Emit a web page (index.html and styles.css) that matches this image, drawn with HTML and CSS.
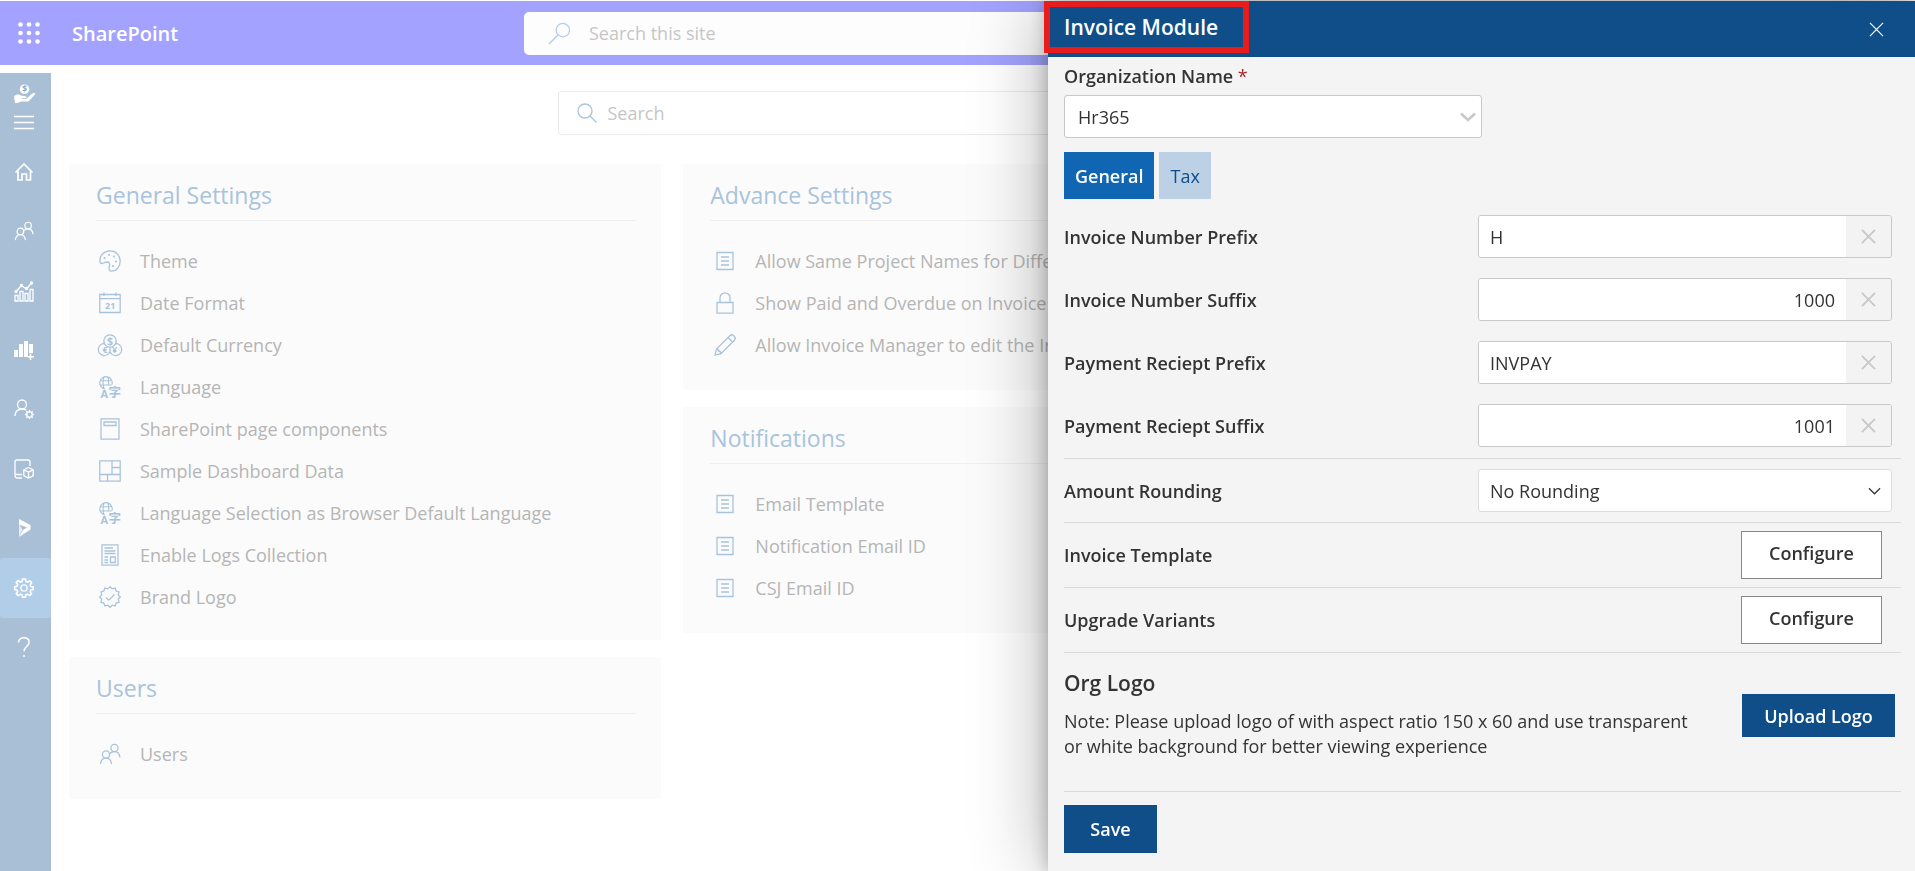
FILE: index.html
```html
<!DOCTYPE html>
<html lang="en">
<head>
<meta charset="utf-8">
<title>Invoice Module</title>
<meta name="viewport" content="width=device-width, initial-scale=1">
<link rel="stylesheet" href="styles.css">
</head>
<body>
<svg class="sprite" aria-hidden="true">
  <symbol id="i-users" viewBox="0 0 22 22"><circle cx="15.5" cy="5" r="3.6"/><circle cx="7" cy="11.5" r="3.6"/><path d="M1.5 21c.3-3.6 2.300-5.900 5.500-5.900s5.200 2.300 5.500 5.900M11 10.500c1-1.300 2.500-1.900 4.400-1.900 3.200 0 5.200 2.300 5.500 5.900"/></symbol>
  <symbol id="i-list" viewBox="0 0 22 22"><path d="M3 2.500h16v17H3zM7 7h8M7 11h8M7 15h8"/></symbol>
  <symbol id="i-lang" viewBox="0 0 22 22"><path stroke-width="1.100" d="M13 8.500A6.200 6.200 0 1 0 6 13M1.200 4.800h11.200M1.200 9h11.500M5 .8C4 4 4 9.500 5 12.800M8.800.8c.9 2.600 1.100 5.200.8 8"/><text class="glyph" x="1.500" y="22" font-size="11">A</text><text class="glyph glyph-cjk" x="9.500" y="20.500" font-size="12.500">字</text></symbol>
</svg>

<header class="suite">
  <button class="waffle" aria-label="App launcher"><svg viewBox="0 0 22 22"><g fill="#fff"><circle cx="2.500" cy="2.500" r="2.300"/><circle cx="11" cy="2.500" r="2.300"/><circle cx="19.500" cy="2.500" r="2.300"/><circle cx="2.500" cy="11" r="2.300"/><circle cx="11" cy="11" r="2.300"/><circle cx="19.500" cy="11" r="2.300"/><circle cx="2.500" cy="19.500" r="2.300"/><circle cx="11" cy="19.500" r="2.300"/><circle cx="19.500" cy="19.500" r="2.300"/></g></svg></button>
  <a class="suite-name" href="#">SharePoint</a>
  <label class="suite-search">
    <svg class="line" viewBox="0 0 24 24"><circle cx="15.500" cy="8.500" r="7"/><path d="M10.500 13.500L1 23"/></svg>
    <input type="search" placeholder="Search this site" aria-label="Search this site">
  </label>
</header>

<div class="app">
  <aside class="rail">
    <svg class="brand" viewBox="0 0 24 20"><circle cx="12" cy="5.500" r="5" fill="#fff"/><text x="9.700" y="8.800" font-size="9" class="brand-sign">$</text><path fill="#fff" d="M1 13c2-2 5-2.500 7-1l5 .8c1.500.3 1.300 1.900 0 1.900H9v.7h5l5.500-5c1.500-1.500 3.800-1.300 4 .2L17 17.500c-1 .8-2 1-3.500 1H8.500L4.500 20H2z"/></svg>
    <button class="burger" aria-label="Toggle navigation"><svg class="line" viewBox="0 0 20 15"><path stroke-width="1.700" d="M0 1.500h20M0 7.500h20M0 13.500h20"/></svg></button>
    <nav class="rail-nav">
      <a href="#" aria-label="Home"><svg class="line" viewBox="0 0 20 20"><path stroke-width="1.700" d="M1.500 10.500L10 2l8.500 8.500M4 9v9h4v-6h4.500v6h4V9"/></svg></a>
      <a href="#" aria-label="Customers"><svg class="line" viewBox="0 0 22 22"><use href="#i-users"/></svg></a>
      <a href="#" aria-label="Reports"><svg class="line" viewBox="0 0 20 20"><path d="M1 14.500h3V20H1zM6 10.500h3V20H6zM11 12.500h3V20h-3zM16 8.500h3V20h-3zM2 10.500l5.500-6 5 3.500 5-6"/><g fill="#fff"><circle cx="2" cy="10.500" r="1"/><circle cx="7.500" cy="4.500" r="1"/><circle cx="12.500" cy="7.500" r="1"/><circle cx="17.500" cy="2" r="1"/></g></svg></a>
      <a href="#" aria-label="Add report"><svg viewBox="0 0 20 20"><path fill="#fff" d="M0 10h4v7H0zM5 4h4v13H5zM10 1h4v16h-4zM15 4h4v9h-4z"/><path class="stroke-only" d="M16.500 13.500V20M13.500 16.700H20"/></svg></a>
      <a href="#" aria-label="User settings"><svg class="line" viewBox="0 0 20 20"><circle cx="8" cy="5.500" r="4.500"/><path d="M1 17c.2-4.500 3-7 7-7 1.800 0 3.200.5 4.300 1.300"/><circle cx="15.500" cy="15.500" r="2.700"/><path d="M15.500 11v2M15.500 18v2M11 15.500h2M18 15.500h2M12.300 12.300l1.400 1.400M17.300 17.300l1.400 1.400M12.300 18.700l1.400-1.400M17.300 13.700l1.400-1.400"/></svg></a>
      <a href="#" aria-label="Products"><svg class="line" viewBox="0 0 20 20"><path d="M8 19H3a2 2 0 0 1-2-2V3a2 2 0 0 1 2-2h11a2 2 0 0 1 2 2v4M1.500 15.500H8M14.500 8.500l4.700 2.300v6L14.500 19l-4.700-2.200v-6zM9.800 10.800l4.700 2.200 4.700-2.200M14.500 13v6"/></svg></a>
      <a href="#" aria-label="Dynamics"><svg viewBox="0 0 20 20"><path fill="#fff" d="M5 1l11.500 6v4.500L5 19l4-7 4-2.500-8-3z"/><path fill="#fff" d="M5 6v13l3.500-7.500z" opacity=".7"/></svg></a>
      <a href="#" class="active" aria-label="Settings"><svg class="line" viewBox="0 0 20 20"><circle cx="10" cy="10" r="3.200"/><path stroke-width="1.600" d="M8.500 1h3l.4 2.500 1.700.7L15.700 2.700l1.900 1.900-1.400 2.200.7 1.700L19.200 9v2.500l-2.400.5-.7 1.700 1.400 2.100-1.800 1.800-2.200-1.400-1.700.7-.4 2.300H8.500L8 16.900l-1.700-.7-2.100 1.400-1.900-1.900 1.400-2.100L3 12l-2.300-.5V8.700L3 8.200l.7-1.700-1.400-2.100 1.900-1.800L6.300 4 8 3.400z"/></svg></a>
      <a href="#" aria-label="Help"><svg class="line" viewBox="0 0 20 20"><path stroke-width="1.500" d="M4.500 5.500C4.500 2.500 6.800.8 9.800.8s5.300 1.700 5.300 4.500c0 4-5.100 4.500-5.100 9M10 18v2"/></svg></a>
    </nav>
  </aside>

  <main class="content">
    <label class="search">
      <svg class="line" viewBox="0 0 20 20"><circle cx="8" cy="8" r="7"/><path d="M13 13l6.500 6.500"/></svg>
      <input type="search" placeholder="Search" aria-label="Search settings">
    </label>
    <div class="columns">
      <div class="column">
        <section class="card card-tall">
          <h2>General Settings</h2>
          <ul>
            <li><a href="#"><svg class="line" viewBox="0 0 22 22"><path d="M11 .8C5 .8.8 5.500.8 10.500c0 2 .8 3 2.200 3 2 0 2.800-1.500 5-1.500 2.300 0 3 1.500 2.500 3.500-.7 3-.7 5.700 2 5.700 5 0 8.700-4.700 8.700-10.200S17 .8 11 .8z"/><g class="dots"><circle cx="5.500" cy="8" r="1.100"/><circle cx="10" cy="5" r="1.100"/><circle cx="15" cy="6.500" r="1.100"/><circle cx="17" cy="11.500" r="1.100"/><circle cx="14" cy="16" r="1.100"/></g></svg>Theme</a></li>
            <li><a href="#"><svg class="line" viewBox="0 0 22 22"><path d="M.8 2.500h20.400v18H.8zM.8 6.700h20.400M5 .5v3.500M17 .5v3.500"/><text class="glyph" x="6" y="17" font-size="9">21</text></svg>Date Format</a></li>
            <li><a href="#"><svg class="line" viewBox="0 0 22 22"><circle cx="11" cy="7" r="6.200"/><path d="M5.500 9.500a6 6 0 1 0 5.500 8M16.500 9.500a6 6 0 1 1-5.500 8M11 17.500v-4"/><text class="glyph" x="8" y="11" font-size="10.500">$</text><text class="glyph" x="3.500" y="19" font-size="9">€</text><text class="glyph" x="13" y="19" font-size="9">¥</text></svg>Default Currency</a></li>
            <li><a href="#"><svg class="line" viewBox="0 0 22 22"><use href="#i-lang"/></svg>Language</a></li>
            <li><a href="#"><svg class="line" viewBox="0 0 22 22"><path d="M2 .8h18v20.400H2zM5 4h12v3.500H5z"/></svg>SharePoint page components</a></li>
            <li><a href="#"><svg class="line" viewBox="0 0 22 22"><path d="M.8.8h20.400v20.400H.8zM.8 14.500h20.400M13 .8v13.700M13 7.500h8.200M8.500 14.500v6.700"/></svg>Sample Dashboard Data</a></li>
            <li><a href="#"><svg class="line" viewBox="0 0 22 22"><use href="#i-lang"/></svg>Language Selection as Browser Default Language</a></li>
            <li><a href="#"><svg class="line" viewBox="0 0 22 22"><path d="M3 .8h16v20.400H3zM5.500 4H14M5.500 7h11M5.500 9.500h11M5.500 13H9M5.500 16H9M5.500 18.500H9M11.500 13h4.800v5.500h-4.800z"/></svg>Enable Logs Collection</a></li>
            <li><a href="#"><svg class="line" viewBox="0 0 22 22"><path d="M11 .8l2.200 2.100 3-.8.900 2.900 2.900.9-.8 3 2.100 2.100-2.100 2.200.8 3-2.900.8-.9 3-3-.8L11 21.300l-2.200-2.100-3 .8-.9-3-2.900-.8.800-3L.7 11l2.100-2.100-.8-3L4.900 5l.9-2.900 3 .8zM7 11.500l2.800 2.700L15.500 8.500"/></svg>Brand Logo</a></li>
          </ul>
        </section>
        <section class="card card-users">
          <h2>Users</h2>
          <ul>
            <li><a href="#"><svg class="line" viewBox="0 0 22 22"><use href="#i-users"/></svg>Users</a></li>
          </ul>
        </section>
      </div>
      <div class="column">
        <section class="card">
          <h2>Advance Settings</h2>
          <ul class="wide">
            <li><a href="#"><svg class="line" viewBox="0 0 22 22"><use href="#i-list"/></svg>Allow Same Project Names for Different Customers</a></li>
            <li><a href="#"><svg class="line" viewBox="0 0 22 22"><path d="M3 10.500h16v10.700H3zM6 10.500V5.800a5 5 0 0 1 10 0v4.700"/></svg>Show Paid and Overdue on Invoice</a></li>
            <li><a href="#"><svg class="line" viewBox="0 0 22 22"><path d="M1 21.200l1.500-6.200L15.800 1.700c1-1 2.500-1.100 3.500-.2l1.200 1.200c1 1 .9 2.500-.1 3.500L7 19.700zM2.500 15c1.300 0 2 .7 2 2 1.500.2 2.500 1 2.500 2.700M14 3.500L18.500 8"/></svg>Allow Invoice Manager to edit the Invoice</a></li>
          </ul>
        </section>
        <section class="card">
          <h2>Notifications</h2>
          <ul class="wide">
            <li><a href="#"><svg class="line" viewBox="0 0 22 22"><use href="#i-list"/></svg>Email Template</a></li>
            <li><a href="#"><svg class="line" viewBox="0 0 22 22"><use href="#i-list"/></svg>Notification Email ID</a></li>
            <li><a href="#"><svg class="line" viewBox="0 0 22 22"><use href="#i-list"/></svg>CSJ Email ID</a></li>
          </ul>
        </section>
      </div>
    </div>
  </main>
</div>

<form class="panel" role="dialog" aria-labelledby="panel-title">
  <header class="panel-head">
    <h1 id="panel-title">Invoice Module</h1>
    <button type="button" class="close" aria-label="Close"><svg class="line" viewBox="0 0 16 16"><path d="M1 1l14 14M15 1L1 15"/></svg></button>
    <span class="highlight"></span>
  </header>
  <div class="panel-body">
    <label class="label" for="org">Organization Name <span class="required">*</span></label>
    <div class="select org">
      <select id="org"><option>Hr365</option></select>
      <svg class="line" viewBox="0 0 16 10"><path stroke-width="2.500" d="M1 1.500l7 6.500 7-6.500"/></svg>
    </div>
    <div class="tabs" role="tablist">
      <button type="button" role="tab" class="tab selected" aria-selected="true">General</button>
      <button type="button" role="tab" class="tab" aria-selected="false">Tax</button>
    </div>
    <div class="fields">
      <div class="field"><label class="label" for="f1">Invoice Number Prefix</label><div class="box"><input id="f1" type="text" value="H"><button type="button" aria-label="Clear"><svg class="line" viewBox="0 0 16 16"><path d="M1 1l14 14M15 1L1 15"/></svg></button></div></div>
      <div class="field"><label class="label" for="f2">Invoice Number Suffix</label><div class="box number"><input id="f2" type="text" value="1000"><button type="button" aria-label="Clear"><svg class="line" viewBox="0 0 16 16"><path d="M1 1l14 14M15 1L1 15"/></svg></button></div></div>
      <div class="field"><label class="label" for="f3">Payment Reciept Prefix</label><div class="box"><input id="f3" type="text" value="INVPAY"><button type="button" aria-label="Clear"><svg class="line" viewBox="0 0 16 16"><path d="M1 1l14 14M15 1L1 15"/></svg></button></div></div>
      <div class="field"><label class="label" for="f4">Payment Reciept Suffix</label><div class="box number"><input id="f4" type="text" value="1001"><button type="button" aria-label="Clear"><svg class="line" viewBox="0 0 16 16"><path d="M1 1l14 14M15 1L1 15"/></svg></button></div></div>
    </div>
    <div class="row row-select"><label class="label" for="rounding">Amount Rounding</label>
      <div class="select rounding">
        <select id="rounding"><option>No Rounding</option></select>
        <svg class="line" viewBox="0 0 14 8"><path d="M1 1l6 6 6-6"/></svg>
      </div>
    </div>
    <div class="row"><span class="label">Invoice Template</span><button type="button" class="configure">Configure</button></div>
    <div class="row"><span class="label">Upgrade Variants</span><button type="button" class="configure">Configure</button></div>
    <div class="row logo">
      <div class="logo-text">
        <h2>Org Logo</h2>
        <p>Note: Please upload logo of with aspect ratio 150 x 60 and use transparent or white background for better viewing experience</p>
      </div>
      <button type="button" class="primary upload">Upload Logo</button>
    </div>
    <div class="actions"><button type="submit" class="primary save">Save</button></div>
  </div>
</form>
</body>
</html>
```

FILE: styles.css
```css
* { box-sizing: border-box; }
body {
  margin: 0;
  height: 100vh;
  overflow: hidden;
  display: flex;
  flex-direction: column;
  padding-top: 1px;
  background: #fff;
  color: #333;
  font-family: "Segoe UI", "Open Sans", "Noto Sans", sans-serif;
  font-size: 18px;
}
button, input, select { font: inherit; color: inherit; margin: 0; }
button { border: 0; background: none; padding: 0; cursor: pointer; }
input { border: 0; outline: 0; background: transparent; }
a { color: inherit; text-decoration: none; }
h1, h2, p, ul { margin: 0; padding: 0; font-weight: 400; }
svg { flex: none; display: block; overflow: visible; }
.sprite { position: absolute; width: 0; height: 0; }
.line { fill: none; stroke: currentColor; stroke-width: 1.3; }
.glyph { fill: currentColor; stroke: none; font-weight: 700; }
.glyph-cjk { font-family: "Noto Sans CJK SC", sans-serif; }
.dots { fill: currentColor; stroke: none; }

/* suite bar */
.suite {
  flex: none;
  display: grid;
  grid-template-columns: 1fr 867px 1fr;
  grid-template-areas: "name search .";
  align-items: center;
  height: 64px;
  background: #a3a3ff;
  color: #fff;
}
.waffle { grid-area: name; justify-self: start; margin-left: 18px; }
.waffle svg { width: 22px; height: 22px; }
.suite-name { grid-area: name; margin-left: 72px; font-size: 20px; font-weight: 600; justify-self: start; }
.suite-search {
  grid-area: search;
  display: flex;
  align-items: center;
  gap: 18px;
  height: 43px;
  padding: 0 24px;
  border-radius: 5px;
  background: #fdfdfd;
  color: #b0cce8;
}
.suite-search svg { width: 23px; height: 23px; }
.suite-search input, .search input { flex: 1; min-width: 0; padding: 0; }
input::placeholder { color: #c6c6c6; opacity: 1; }

/* rail */
.app { flex: 1; display: flex; min-height: 0; padding-top: 8px; }
.rail {
  flex: none;
  width: 51px;
  display: flex;
  flex-direction: column;
  align-items: center;
  padding-top: 11px;
  background: #a9bfd6;
  color: #fff;
}
.brand { width: 23px; height: 19px; margin-right: 3px; }
.brand-sign { fill: #8aa7c6; font-weight: 700; }
.burger { margin: 12px 3px 0 0; }
.burger svg { width: 20px; height: 15px; }
.rail-nav { display: flex; flex-direction: column; width: 100%; height: 535px; margin-top: 12px; }
.rail-nav a { flex: 1; display: flex; align-items: center; justify-content: center; padding-right: 3px; border-radius: 3px; }
.rail-nav .active { background: #b1cde8; }
.rail-nav svg { width: 20px; height: 20px; }
.stroke-only { fill: none; stroke: #fff; stroke-width: 1.5; }

/* settings */
.content { flex: 1; min-width: 0; padding: 18px 25px 0 18px; }
.search {
  display: flex;
  align-items: center;
  gap: 11px;
  width: 844px;
  max-width: 100%;
  height: 44px;
  margin: 0 auto 29px;
  padding: 0 18px;
  border: 1px solid #ebebeb;
  border-radius: 3px;
  color: #a9c3dc;
}
.search svg { width: 20px; height: 20px; }
.columns { display: grid; grid-template-columns: repeat(3, 1fr); gap: 22px; }
.column { display: flex; flex-direction: column; gap: 17px; min-width: 0; }
.card { padding: 13px 25px 22px 27px; background: #fbfbfb; min-height: 226px; }
.card-tall { min-height: 476px; }
.card-users { min-height: 142px; }
.card h2 {
  height: 44px;
  line-height: 36px;
  border-bottom: 1px solid #efefef;
  color: #a9c3dc;
  font-size: 23px;
}
.card ul { list-style: none; padding-top: 19px; }
.card-tall ul { display: flex; flex-direction: column; height: 395px; }
.card-tall li { flex: 1; }
.card li a { display: flex; align-items: center; gap: 19px; height: 42px; padding-left: 3px; color: #b5b5b5; white-space: nowrap; }
.card ul.wide a { padding-left: 4px; }
.card li svg { width: 22px; height: 22px; color: #a9c3dc; }

/* drawer */
.panel {
  position: fixed;
  top: 1px;
  right: 0;
  bottom: 0;
  width: 867px;
  max-width: 100%;
  background: #f4f4f4;
  box-shadow: 0 0 72px rgba(0, 0, 0, .32), 0 0 18px rgba(0, 0, 0, .26);
}
.panel-head {
  position: relative;
  display: flex;
  align-items: center;
  justify-content: space-between;
  height: 56px;
  padding: 0 31px 0 16px;
  background: #104e8a;
  color: #fff;
}
.panel-head h1 { padding-bottom: 4px; font-size: 21px; font-weight: 600; }
.close svg { width: 15px; height: 15px; }
.highlight { position: absolute; left: -4px; top: 0; width: 205px; height: 52px; border: 6px solid #e81c1c; pointer-events: none; }
.panel-body { padding: 6px 14px 0 16px; }
.label { display: block; line-height: 26px; font-weight: 600; }
.required { color: #a4262c; font-weight: 400; }
.select { position: relative; height: 43px; }
.select select {
  appearance: none;
  width: 100%;
  height: 100%;
  border: 1px solid #c8c8c8;
  border-radius: 3px;
  background: #fff;
  padding: 0 40px 0 13px;
}
.select svg { position: absolute; top: 50%; translate: 0 -50%; pointer-events: none; }
.org { width: 418px; max-width: 100%; margin-top: 6px; }
.org svg { right: 6px; width: 16px; height: 10px; color: #c8c8c8; }
.rounding { width: 414px; }
.rounding select { border-color: #dcdcdc; padding-left: 11px; }
.rounding svg { right: 11px; width: 13px; height: 8px; }
.tabs { display: flex; gap: 5px; margin-top: 14px; }
.tab { height: 47px; padding: 0 11px; background: #bcd1e6; color: #104e8a; }
.tab.selected { background: #1166b4; color: #fff; font-weight: 600; }
.fields { display: flex; flex-direction: column; gap: 20px; padding: 16px 9px 11px 0; }
.field { display: flex; align-items: center; justify-content: space-between; }
.box { display: flex; width: 414px; height: 43px; border: 1px solid #c8c8c8; border-radius: 3px; overflow: hidden; }
.box input { flex: 1; min-width: 0; padding: 0 11px; background: #fff; }
.number input { text-align: right; }
.box button { display: flex; align-items: center; justify-content: center; width: 45px; padding-right: 1px; color: #c8c8c8; background: #f3f3f3; }
.box svg { width: 15px; height: 15px; stroke-width: 2; }
.row { display: flex; align-items: center; justify-content: space-between; min-height: 65px; padding-right: 9px; border-top: 1px solid #dadada; }
.row-select { min-height: 64px; }
.configure { width: 141px; height: 48px; margin-right: 10px; padding-bottom: 4px; border: 1px solid #888; background: #fff; font-weight: 600; }
.logo { min-height: 140px; padding-right: 6px; align-items: flex-start; border-bottom: 1px solid #dadada; }
.logo-text { padding-top: 14px; max-width: 640px; }
.logo h2 { font-size: 21px; line-height: 32px; font-weight: 600; }
.logo p { margin-top: 10px; line-height: 25px; }
.primary { background: #104e8a; color: #fff; font-weight: 600; }
.upload { width: 153px; height: 43px; margin-top: 41px; }
.actions { padding-top: 13px; }
.save { width: 93px; height: 48px; }
```
